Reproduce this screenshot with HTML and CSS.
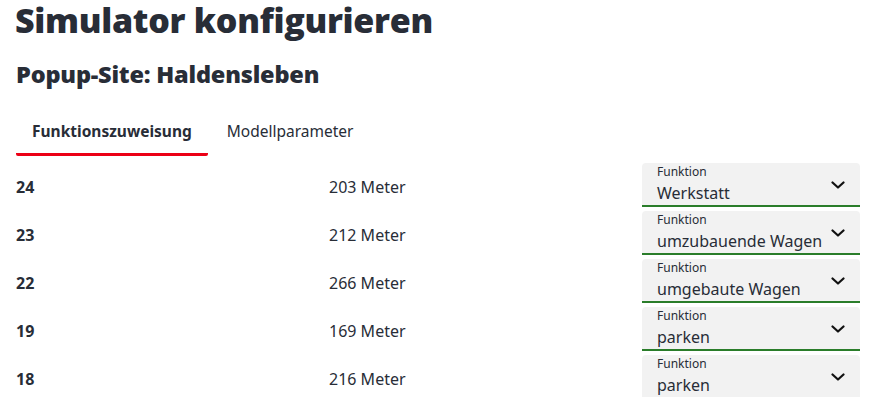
FILE: index.html
```html
<!DOCTYPE html>
<html lang="de">
<head>
<meta charset="utf-8">
<title>Simulator konfigurieren</title>
<link rel="stylesheet" href="styles.css">
</head>
<body>
<main class="page">
  <h1 class="title">Simulator konfigurieren</h1>
  <h2 class="subtitle">Popup-Site: Haldensleben</h2>
  <nav class="tabs">
    <div class="tab tab-active">Funktionszuweisung</div>
    <div class="tab">Modellparameter</div>
  </nav>
  <div class="rows">
    <div class="row">
      <div class="num">24</div>
      <div class="len">203 Meter</div>
      <div class="select"><span class="sel-label">Funktion</span><span class="sel-value">Werkstatt</span><svg class="chev" viewBox="0 0 14 8" width="14" height="8"><path d="M1.5 1.5 L7 6.5 L12.5 1.5" fill="none" stroke="#111" stroke-width="2.2" stroke-linecap="round" stroke-linejoin="round"/></svg></div>
    </div>
    <div class="row">
      <div class="num">23</div>
      <div class="len">212 Meter</div>
      <div class="select"><span class="sel-label">Funktion</span><span class="sel-value">umzubauende Wagen</span><svg class="chev" viewBox="0 0 14 8" width="14" height="8"><path d="M1.5 1.5 L7 6.5 L12.5 1.5" fill="none" stroke="#111" stroke-width="2.2" stroke-linecap="round" stroke-linejoin="round"/></svg></div>
    </div>
    <div class="row">
      <div class="num">22</div>
      <div class="len">266 Meter</div>
      <div class="select"><span class="sel-label">Funktion</span><span class="sel-value">umgebaute Wagen</span><svg class="chev" viewBox="0 0 14 8" width="14" height="8"><path d="M1.5 1.5 L7 6.5 L12.5 1.5" fill="none" stroke="#111" stroke-width="2.2" stroke-linecap="round" stroke-linejoin="round"/></svg></div>
    </div>
    <div class="row">
      <div class="num">19</div>
      <div class="len">169 Meter</div>
      <div class="select"><span class="sel-label">Funktion</span><span class="sel-value">parken</span><svg class="chev" viewBox="0 0 14 8" width="14" height="8"><path d="M1.5 1.5 L7 6.5 L12.5 1.5" fill="none" stroke="#111" stroke-width="2.2" stroke-linecap="round" stroke-linejoin="round"/></svg></div>
    </div>
    <div class="row">
      <div class="num">18</div>
      <div class="len">216 Meter</div>
      <div class="select"><span class="sel-label">Funktion</span><span class="sel-value">parken</span><svg class="chev" viewBox="0 0 14 8" width="14" height="8"><path d="M1.5 1.5 L7 6.5 L12.5 1.5" fill="none" stroke="#111" stroke-width="2.2" stroke-linecap="round" stroke-linejoin="round"/></svg></div>
    </div>
  </div>
</main>
</body>
</html>
```
FILE: styles.css
```css
* { box-sizing: border-box; }
html, body { margin: 0; padding: 0; background: #fff; }
body {
  font-family: "Open Sans", "Noto Sans", sans-serif;
  color: #282d37;
  overflow: hidden;
}
.page {
  padding: 0 20px 0 16px;
}
.title {
  margin: 0 0 0 -1px;
  font-size: 34px;
  font-weight: 800;
  line-height: 40px;
  letter-spacing: -0.3px;
}
.subtitle {
  margin: 18px 0 0 0;
  font-size: 23.5px;
  font-weight: 800;
  line-height: 32px;
  letter-spacing: -0.2px;
}
.tabs {
  display: flex;
  margin-top: 31px;
  gap: 3px;
}
.tab {
  font-family: "Noto Sans", sans-serif;
  font-size: 15.5px;
  line-height: 20px;
  padding: 0 16px 12px 16px;
  border-bottom: 3px solid transparent;
  color: #282d37;
}
.tab-active {
  font-weight: 700;
  border-bottom-color: #ec0016;
  border-radius: 2px;
}
.rows {
  display: flex;
  flex-direction: column;
  gap: 4px;
  margin-top: 7px;
}
.row {
  display: grid;
  grid-template-columns: 313px 313px 218px;
  align-items: center;
  height: 44px;
  font-family: "Noto Sans", sans-serif;
  font-size: 16px;
}
.num { font-weight: 700; padding-top: 4px; }
.len { padding-top: 4px; }
.select {
  position: relative;
  height: 44px;
  background: #f2f2f2;
  border-radius: 4px 4px 0 0;
  border-bottom: 2px solid #2a7d2a;
  padding: 1px 0 0 15px;
  display: flex;
  flex-direction: column;
}
.sel-label {
  font-size: 12px;
  line-height: 15px;
}
.sel-value {
  font-size: 16px;
  line-height: 22px;
  margin-top: 3px;
}
.chev {
  position: absolute;
  right: 15px;
  top: 18px;
}
```
